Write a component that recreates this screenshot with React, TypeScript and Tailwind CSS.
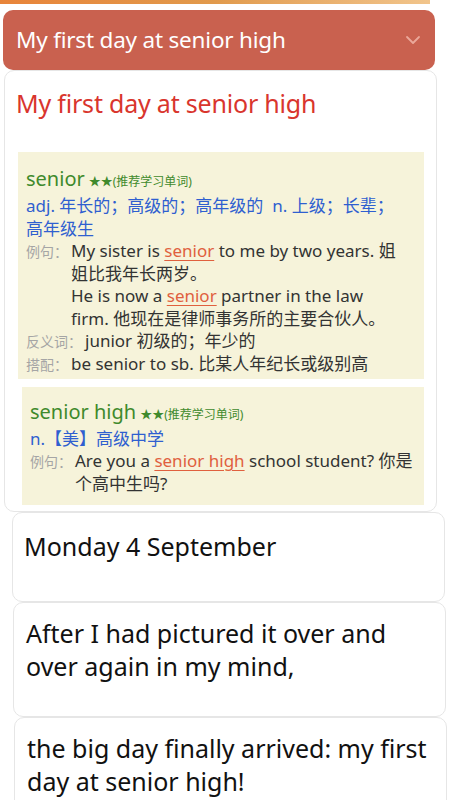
import { ChevronDown } from 'lucide-react';

const font = { fontFamily: '"Noto Sans", "Noto Sans CJK SC", sans-serif' };

function Hl({ children }: { children: React.ReactNode }) {
  return <span className="text-[#e0603e] underline decoration-1 underline-offset-[3px]">{children}</span>;
}

function Stars() {
  return (
    <span className="text-[12px] text-[#3f8a2c] ml-1">
      ★★(推荐学习单词)
    </span>
  );
}

function Row({ label, children }: { label: string; children: React.ReactNode }) {
  return (
    <div className="flex items-baseline">
      <span className="text-[14px] text-[#a5a5a5] shrink-0 mr-[3px] leading-[18px]">{label}：</span>
      <div className="text-[17px] text-[#333] leading-[22.5px]">{children}</div>
    </div>
  );
}

export default function App() {
  return (
    <div className="w-[450px] h-[800px] overflow-hidden bg-white" style={font}>
      {/* top strip */}
      <div className="h-[4px] w-[430px] bg-gradient-to-r from-[#e8843a] via-[#e19a4c] to-[#f1c58c]" />

      <div className="px-[3px] pt-[6px]">
        {/* header */}
        <div className="h-[60px] w-[432px] rounded-[10px] bg-[#c9614f] flex items-center justify-between pl-[13px] pr-[10px]">
          <span className="text-white text-[22.5px] tracking-[-0.2px]">My first day at senior high</span>
          <ChevronDown className="w-[24px] h-[24px] text-[#eba89a]" strokeWidth={1.8} />
        </div>

        {/* card 1 */}
        <div className="w-[433px] ml-[1px] border border-[#e6e6e6] rounded-[10px] pl-[13px] pr-[12px] pt-[15px] pb-[6px]">
          <div className="text-[#d9352d] text-[25px] leading-[34px] tracking-[-0.2px] -ml-[2px]">My first day at senior high</div>

          <div className="mt-[32px] bg-[#f6f3da] pl-[8px] pr-[24px] pt-[15px] pb-[4px]">
            <div className="text-[#3f8a2c] text-[20px] leading-[24px]">
              senior<Stars />
            </div>
            <div className="text-[#2f5fd0] text-[17px] leading-[23px]">
              adj. 年长的；高级的；高年级的&nbsp; n. 上级；长辈；高年级生
            </div>
            <Row label="例句">
              My sister is <Hl>senior</Hl> to me by two years. 姐姐比我年长两岁。
              <br />
              He is now a <Hl>senior</Hl> partner in the law firm. 他现在是律师事务所的主要合伙人。
            </Row>
            <Row label="反义词">junior 初级的；年少的</Row>
            <Row label="搭配">be senior to sb. 比某人年纪长或级别高</Row>
          </div>

          <div className="mt-[8px] ml-[4px] bg-[#f6f3da] pl-[8px] pr-[6px] pt-[13px] pb-[10px]">
            <div className="text-[#3f8a2c] text-[20px] leading-[24px]">
              senior high<Stars />
            </div>
            <div className="text-[#2f5fd0] text-[17px] leading-[23px]">n.【美】高级中学</div>
            <Row label="例句">
              Are you a <Hl>senior high</Hl> school student? 你是个高中生吗?
            </Row>
          </div>
        </div>

        {/* sentence cards */}
        <div className="ml-[9px] w-[433px] h-[90px] border border-[#e6e6e6] rounded-[10px] px-[11px] pt-[17px] text-[25px] text-[#111] leading-[33px]">
          Monday 4 September
        </div>
        <div className="ml-[10px] w-[433px] h-[115px] border border-[#e6e6e6] rounded-[10px] px-[12px] pt-[14px] text-[25px] text-[#111] leading-[33px]">
          After I had pictured it over and over again in my mind,
        </div>
        <div className="ml-[11px] w-[433px] h-[100px] border border-[#e6e6e6] rounded-[10px] px-[12px] pt-[14px] text-[25px] text-[#111] leading-[33px]">
          the big day finally arrived: my first day at senior high!
        </div>
      </div>
    </div>
  );
}
